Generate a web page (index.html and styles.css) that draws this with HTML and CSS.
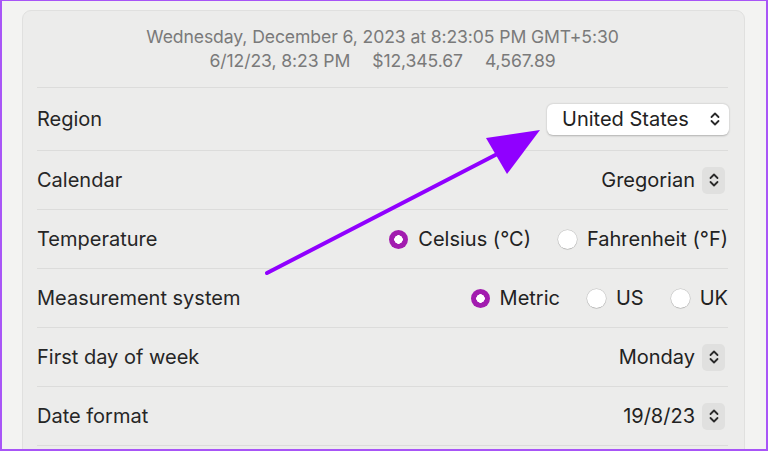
FILE: index.html
```html
<!DOCTYPE html>
<html lang="en">
<head>
<meta charset="utf-8">
<title>Language &amp; Region</title>
<link rel="stylesheet" href="styles.css">
</head>
<body>
<div class="frame">
  <div class="card">
    <div class="preview">
      <div class="line">Wednesday, December 6, 2023 at 8:23:05 PM GMT+5:30</div>
      <div class="line"><span>6/12/23, 8:23 PM</span><span>$12,345.67</span><span>4,567.89</span></div>
    </div>
    <div class="row row-tall">
      <div class="label">Region</div>
      <div class="popup">
        <span>United States</span>
        <svg class="chev" width="10" height="16" viewBox="0 0 10 16"><path d="M1.5 6 L5 2.5 L8.5 6 M1.5 10 L5 13.5 L8.5 10" fill="none" stroke="#2a2a2a" stroke-width="1.8" stroke-linecap="round" stroke-linejoin="round"/></svg>
      </div>
    </div>
    <div class="row">
      <div class="label">Calendar</div>
      <div class="select">
        <span>Gregorian</span>
        <span class="stepper"><svg width="10" height="16" viewBox="0 0 10 16"><path d="M1.5 6 L5 2.5 L8.5 6 M1.5 10 L5 13.5 L8.5 10" fill="none" stroke="#2a2a2a" stroke-width="1.8" stroke-linecap="round" stroke-linejoin="round"/></svg></span>
      </div>
    </div>
    <div class="row">
      <div class="label">Temperature</div>
      <div class="radios">
        <label class="opt"><span class="radio on"></span>Celsius (°C)</label>
        <label class="opt"><span class="radio"></span>Fahrenheit (°F)</label>
      </div>
    </div>
    <div class="row">
      <div class="label">Measurement system</div>
      <div class="radios">
        <label class="opt"><span class="radio on"></span>Metric</label>
        <label class="opt"><span class="radio"></span>US</label>
        <label class="opt"><span class="radio"></span>UK</label>
      </div>
    </div>
    <div class="row">
      <div class="label">First day of week</div>
      <div class="select">
        <span>Monday</span>
        <span class="stepper"><svg width="10" height="16" viewBox="0 0 10 16"><path d="M1.5 6 L5 2.5 L8.5 6 M1.5 10 L5 13.5 L8.5 10" fill="none" stroke="#2a2a2a" stroke-width="1.8" stroke-linecap="round" stroke-linejoin="round"/></svg></span>
      </div>
    </div>
    <div class="row">
      <div class="label">Date format</div>
      <div class="select">
        <span>19/8/23</span>
        <span class="stepper"><svg width="10" height="16" viewBox="0 0 10 16"><path d="M1.5 6 L5 2.5 L8.5 6 M1.5 10 L5 13.5 L8.5 10" fill="none" stroke="#2a2a2a" stroke-width="1.8" stroke-linecap="round" stroke-linejoin="round"/></svg></span>
      </div>
    </div>
    <div class="row"></div>
  </div>
  <svg class="arrow" width="768" height="451" viewBox="0 0 768 451">
    <line x1="267" y1="273" x2="505" y2="150" stroke="#9000ff" stroke-width="4" stroke-linecap="round"/>
    <polygon points="540,130 486,138 507,174" fill="#9000ff"/>
  </svg>
</div>
</body>
</html>
```

FILE: styles.css
```css
* { box-sizing: border-box; }
html, body { margin: 0; padding: 0; }
body {
  width: 768px;
  height: 451px;
  overflow: hidden;
  background: #f3f3f2;
  font-family: Inter, "Liberation Sans", sans-serif;
  color: #262626;
}
.frame {
  position: relative;
  width: 768px;
  height: 451px;
  border: 2px solid #a855f7;
  border-top-width: 1px;
  padding: 9px 21px 0 20px;
  overflow: hidden;
}
.card {
  background: #ececeb;
  border: 1px solid #e0e0df;
  border-radius: 9px;
  height: 480px;
  padding: 0 16px 0 14px;
}
.preview {
  padding: 14px 0 14px;
  border-bottom: 1px solid #dcdcdb;
  text-align: center;
  color: #7a7a7a;
  font-size: 17.6px;
  line-height: 24px;
  letter-spacing: -0.1px;
}
.preview .line span { margin: 0 11px; }
.row {
  display: flex;
  justify-content: space-between;
  align-items: center;
  height: 59px;
  border-bottom: 1px solid #dcdcdb;
  font-size: 20px;
}
.row-tall { height: 63px; }
.label { color: #262626; }
.popup {
  display: flex;
  align-items: center;
  justify-content: space-between;
  width: 182px;
  height: 31px;
  padding: 0 9px 0 15px;
  background: #fff;
  border-radius: 6px;
  box-shadow: 0 0.5px 2px rgba(0,0,0,0.25);
  margin-right: -1px;
  color: #222;
}
.chev { display: block; }
.select {
  display: flex;
  align-items: center;
  gap: 7px;
  margin-right: 3px;
  color: #222;
}
.stepper {
  display: flex;
  align-items: center;
  justify-content: center;
  width: 23px;
  height: 27px;
  background: #e0e0df;
  border-radius: 5px;
}
.stepper svg { display: block; }
.radios {
  display: flex;
  align-items: center;
  gap: 27px;
}
.opt {
  display: flex;
  align-items: center;
  gap: 10px;
  color: #222;
}
.radio {
  width: 19px;
  height: 19px;
  border-radius: 50%;
  background: #fff;
  box-shadow: 0 0 0 0.5px rgba(0,0,0,0.18), 0 0.5px 1px rgba(0,0,0,0.15);
  flex: none;
}
.radio.on {
  background: radial-gradient(circle, #fff 0 4px, #a21caf 4.5px);
  box-shadow: none;
}
.arrow {
  position: absolute;
  left: -2px;
  top: -1px;
  pointer-events: none;
}
```
